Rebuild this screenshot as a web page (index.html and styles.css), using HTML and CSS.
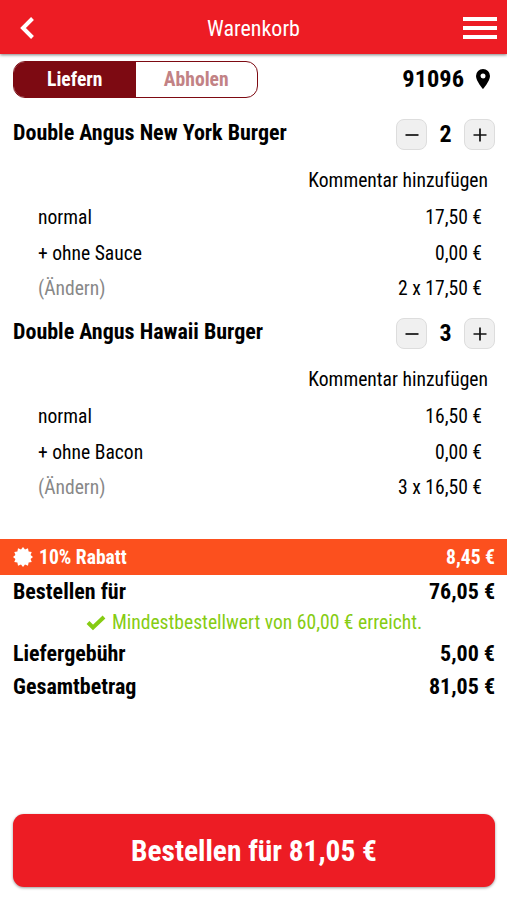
FILE: index.html
```html
<!DOCTYPE html>
<html lang="de">

<head>
    <meta charset="UTF-8">
    <meta name="viewport" content="width=device-width, initial-scale=1">
    <title>Warenkorb</title>
    <link rel="stylesheet" href="styles.css">
</head>

<body>
    <header class="header">
        <svg class="back" viewBox="0 0 14 22"><path d="M12.500 1.500 3 11l9.500 9.500"/></svg>
        <h1>Warenkorb</h1>
        <div class="menu">
            <span></span>
            <span></span>
            <span></span>
        </div>
    </header>

    <div class="delivery">
        <div class="toggle">
            <span class="toggle_item active">Liefern</span>
            <span class="toggle_item">Abholen</span>
        </div>
        <div class="zip">
            <span>91096</span>
            <svg class="pin" viewBox="0 0 14 20"><path d="M7 0a7 7 0 0 0-7 7c0 5 7 13 7 13s7-8 7-13a7 7 0 0 0-7-7zm0 4.500a2.500 2.500 0 1 1 0 5 2.500 2.500 0 0 1 0-5z"/></svg>
        </div>
    </div>

    <main class="cart">
        <section class="item">
            <div class="item_head">
                <h2>Double Angus New York Burger</h2>
                <div class="stepper">
                    <button type="button"><svg viewBox="0 0 14 14"><path d="M.5 7h13"/></svg></button>
                    <span class="count">2</span>
                    <button type="button"><svg viewBox="0 0 14 14"><path d="M.5 7h13M7 .5v13"/></svg></button>
                </div>
            </div>
            <div class="comment">Kommentar hinzufügen</div>
            <ul class="options">
                <li><span>normal</span><span>17,50 €</span></li>
                <li><span>+ ohne Sauce</span><span>0,00 €</span></li>
                <li><span class="change">(Ändern)</span><span>2 x 17,50 €</span></li>
            </ul>
        </section>

        <section class="item">
            <div class="item_head">
                <h2>Double Angus Hawaii Burger</h2>
                <div class="stepper">
                    <button type="button"><svg viewBox="0 0 14 14"><path d="M.5 7h13"/></svg></button>
                    <span class="count">3</span>
                    <button type="button"><svg viewBox="0 0 14 14"><path d="M.5 7h13M7 .5v13"/></svg></button>
                </div>
            </div>
            <div class="comment">Kommentar hinzufügen</div>
            <ul class="options">
                <li><span>normal</span><span>16,50 €</span></li>
                <li><span>+ ohne Bacon</span><span>0,00 €</span></li>
                <li><span class="change">(Ändern)</span><span>3 x 16,50 €</span></li>
            </ul>
        </section>
    </main>

    <div class="discount">
        <svg class="badge" viewBox="-10 -10 20 20"><path d="M0-10l2 2.400L5-8.700l.6 3.100 3.100.6L7.600-2 10 0 7.600 2 8.700 5l-3.100.6L5 8.700 2 7.600 0 10l-2-2.400L-5 8.700l-.6-3.100L-8.700 5-7.600 2-10 0l2.400-2L-8.700-5l3.100-.6L-5-8.700-2-7.600z"/></svg>
        <span class="discount_label">10% Rabatt</span>
        <span>8,45 €</span>
    </div>

    <div class="totals">
        <div class="total"><span>Bestellen für</span><span>76,05 €</span></div>
        <div class="minimum">
            <svg viewBox="0 0 20 16"><path d="M2 7.500l5 5L18 2"/></svg>
            <span>Mindestbestellwert von 60,00 € erreicht.</span>
        </div>
        <div class="total"><span>Liefergebühr</span><span>5,00 €</span></div>
        <div class="total"><span>Gesamtbetrag</span><span>81,05 €</span></div>
    </div>

    <button class="order" type="button">Bestellen für 81,05 €</button>
</body>

</html>
```
FILE: styles.css
```css
* {
    margin: 0;
    padding: 0;
    box-sizing: border-box;
    list-style: none;
}

body {
    height: 900px;
    display: flex;
    flex-direction: column;
    background-color: #fff;
    color: #000;
    font-family: "Roboto Condensed", Roboto, sans-serif;
    font-stretch: 75%;
    font-size: 19.6px;
    white-space: nowrap;
    overflow: hidden;
}

button {
    font: inherit;
    font-stretch: 75%;
    border: 0;
}

svg {
    display: block;
}

/* header */
.header {
    height: 54px;
    flex-shrink: 0;
    padding: 2px 10px 0 20px;
    display: grid;
    grid-template-columns: 60px 1fr 70px;
    align-items: center;
    background-color: #ed1c24;
    box-shadow: 0 1px 3px rgba(0, 0, 0, .5);
    color: #fff;
}

.header h1 {
    font-size: 22px;
    font-weight: 400;
    text-align: center;
}

.back {
    width: 14px;
    height: 22px;
    fill: none;
    stroke: #fff;
    stroke-width: 4;
}

.menu {
    width: 34px;
    justify-self: end;
    display: grid;
    gap: 5px;
}

.menu span {
    height: 4px;
    background-color: #fff;
}

/* delivery */
.delivery {
    height: 37px;
    flex-shrink: 0;
    margin: 7px 17px 0 13px;
    display: flex;
    justify-content: space-between;
    align-items: center;
}

.toggle {
    width: 245px;
    height: 37px;
    display: flex;
    border: 1px solid #7d0a12;
    border-radius: 12px;
    overflow: hidden;
    font-weight: 700;
}

.toggle_item {
    flex: 1;
    line-height: 35px;
    text-align: center;
    color: #c28285;
}

.toggle_item.active {
    background-color: #7d0a12;
    color: #fff;
}

.zip {
    padding-bottom: 2px;
    display: flex;
    align-items: center;
    gap: 12px;
    font-size: 24.4px;
    font-weight: 700;
}

.pin {
    width: 14px;
    height: 20px;
}

/* items */
.cart {
    height: 440px;
    flex-shrink: 0;
    padding: 19px 12px 0 13px;
}

.item {
    height: 199px;
}

.item_head {
    height: 34px;
    display: flex;
    justify-content: space-between;
}

.item_head h2 {
    font-size: 22px;
    line-height: 32px;
}

.stepper {
    padding-top: 2px;
    display: flex;
}

.stepper button {
    width: 31px;
    height: 31px;
    display: grid;
    place-items: center;
    border: 1px solid #ddd;
    border-radius: 8px;
    background-color: #f0f0f0;
}

.stepper svg {
    width: 14px;
    height: 14px;
    stroke: #111;
    stroke-width: 1.7;
}

.count {
    width: 37px;
    line-height: 31px;
    font-size: 24px;
    font-weight: 700;
    text-align: center;
}

.comment {
    height: 49px;
    padding-right: 7px;
    line-height: 60px;
    text-align: right;
}

.options {
    padding: 0 13px 0 25px;
}

.options li {
    height: 35.5px;
    line-height: 35px;
    display: flex;
    justify-content: space-between;
}

.change {
    color: #888;
}

/* discount */
.discount {
    height: 36px;
    flex-shrink: 0;
    margin-top: 1px;
    padding: 0 12px 0 13px;
    display: flex;
    align-items: center;
    background-color: #fc501e;
    color: #fff;
    font-weight: 700;
}

.badge {
    width: 20px;
    height: 20px;
    margin-right: 6px;
    fill: #fff;
}

.discount_label {
    flex: 1;
}

/* totals */
.totals {
    padding: 0 12px 0 13px;
}

.total {
    height: 33px;
    line-height: 33px;
    display: flex;
    justify-content: space-between;
    font-size: 22px;
    font-weight: 700;
}

.minimum {
    height: 29px;
    display: flex;
    justify-content: center;
    align-items: center;
    gap: 6px;
    color: #86cc12;
}

.minimum svg {
    width: 20px;
    height: 16px;
    fill: none;
    stroke: #86cc12;
    stroke-width: 4;
}

.order {
    height: 73px;
    margin: auto 12px 13px 13px;
    border-radius: 11px;
    background-color: #ed1c24;
    box-shadow: 0 1px 3px rgba(0, 0, 0, .4);
    color: #fff;
    font-size: 29.4px;
    font-weight: 700;
}
```
